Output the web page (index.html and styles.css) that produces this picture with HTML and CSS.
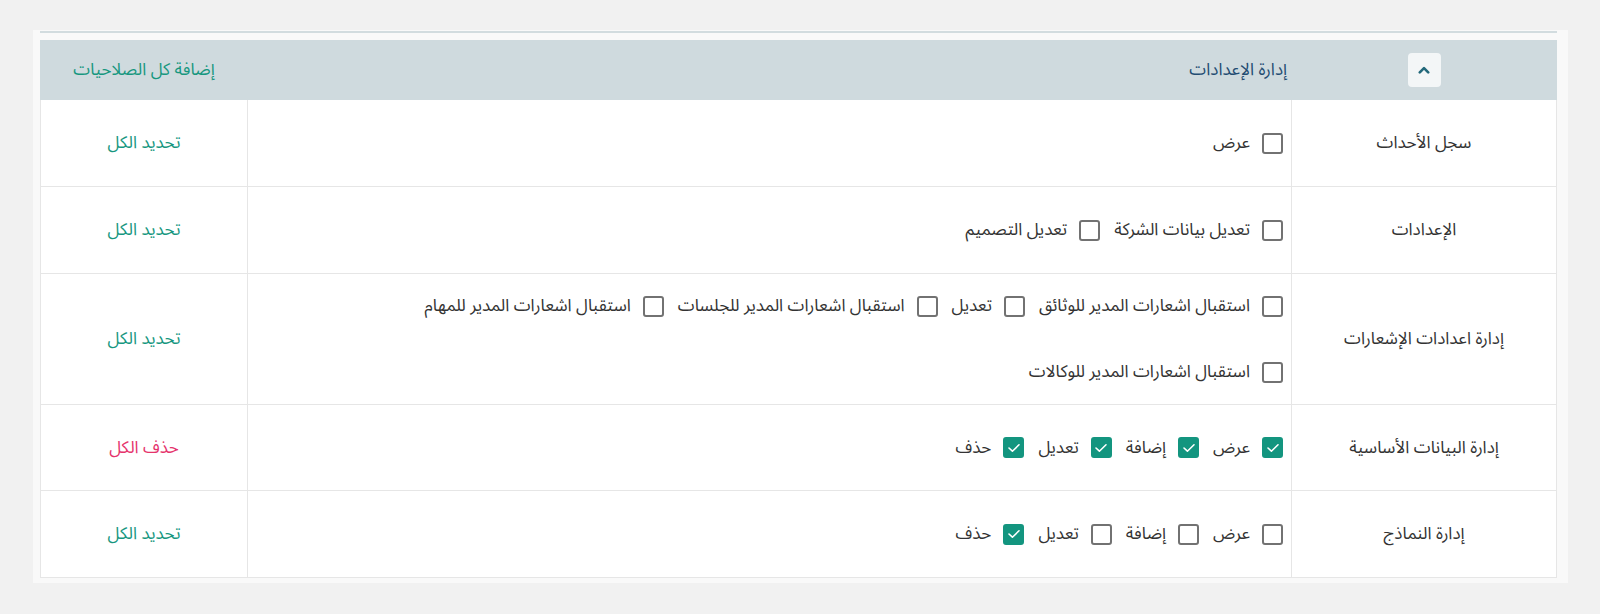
FILE: index.html
```html
<!DOCTYPE html>
<html lang="ar" dir="rtl">
<head>
<meta charset="utf-8">
<title>إدارة الإعدادات</title>
<link rel="stylesheet" href="styles.css">
</head>
<body>
<div class="card">
  <div class="card-line"></div>
  <table class="perm">
    <colgroup>
      <col class="col-name">
      <col class="col-items">
      <col class="col-action">
    </colgroup>
    <thead>
      <tr class="head">
        <th class="head-toggle">
          <span class="toggle-btn">
            <svg width="12" height="8" viewBox="0 0 12 8"><path d="M1.8 6.4 L6 2.2 L10.2 6.4" fill="none" stroke="#22687a" stroke-width="2.6" stroke-linecap="round" stroke-linejoin="round"/></svg>
          </span>
        </th>
        <th class="head-title">إدارة الإعدادات</th>
        <th class="head-action">إضافة كل الصلاحيات</th>
      </tr>
    </thead>
    <tbody>
      <tr class="r87">
        <td class="name">سجل الأحداث</td>
        <td class="items"><div class="list">
          <label class="item"><span class="cb"></span><span>عرض</span></label>
        </div></td>
        <td class="action"><span class="act-add">تحديد الكل</span></td>
      </tr>
      <tr class="r87">
        <td class="name">الإعدادات</td>
        <td class="items"><div class="list">
          <label class="item"><span class="cb"></span><span>تعديل بيانات الشركة</span></label>
          <label class="item"><span class="cb"></span><span>تعديل التصميم</span></label>
        </div></td>
        <td class="action"><span class="act-add">تحديد الكل</span></td>
      </tr>
      <tr class="r131">
        <td class="name">إدارة اعدادات الإشعارات</td>
        <td class="items"><div class="list multi">
          <label class="item"><span class="cb"></span><span>استقبال اشعارات المدير للوثائق</span></label>
          <label class="item"><span class="cb"></span><span>تعديل</span></label>
          <label class="item"><span class="cb"></span><span>استقبال اشعارات المدير للجلسات</span></label>
          <label class="item"><span class="cb"></span><span>استقبال اشعارات المدير للمهام</span></label>
          <span class="break"></span>
          <label class="item"><span class="cb"></span><span>استقبال اشعارات المدير للوكالات</span></label>
        </div></td>
        <td class="action"><span class="act-add">تحديد الكل</span></td>
      </tr>
      <tr class="r86">
        <td class="name">إدارة البيانات الأساسية</td>
        <td class="items"><div class="list">
          <label class="item"><span class="cb on"><svg width="14" height="10" viewBox="0 0 14 10"><path d="M2 5 L5.4 8.2 L12 1.8" fill="none" stroke="#fff" stroke-width="1.6" stroke-linecap="round" stroke-linejoin="round"/></svg></span><span>عرض</span></label>
          <label class="item"><span class="cb on"><svg width="14" height="10" viewBox="0 0 14 10"><path d="M2 5 L5.4 8.2 L12 1.8" fill="none" stroke="#fff" stroke-width="1.6" stroke-linecap="round" stroke-linejoin="round"/></svg></span><span>إضافة</span></label>
          <label class="item"><span class="cb on"><svg width="14" height="10" viewBox="0 0 14 10"><path d="M2 5 L5.4 8.2 L12 1.8" fill="none" stroke="#fff" stroke-width="1.6" stroke-linecap="round" stroke-linejoin="round"/></svg></span><span>تعديل</span></label>
          <label class="item"><span class="cb on"><svg width="14" height="10" viewBox="0 0 14 10"><path d="M2 5 L5.4 8.2 L12 1.8" fill="none" stroke="#fff" stroke-width="1.6" stroke-linecap="round" stroke-linejoin="round"/></svg></span><span>حذف</span></label>
        </div></td>
        <td class="action"><span class="act-del">حذف الكل</span></td>
      </tr>
      <tr class="r87">
        <td class="name">إدارة النماذج</td>
        <td class="items"><div class="list">
          <label class="item"><span class="cb"></span><span>عرض</span></label>
          <label class="item"><span class="cb"></span><span>إضافة</span></label>
          <label class="item"><span class="cb"></span><span>تعديل</span></label>
          <label class="item"><span class="cb on"><svg width="14" height="10" viewBox="0 0 14 10"><path d="M2 5 L5.4 8.2 L12 1.8" fill="none" stroke="#fff" stroke-width="1.6" stroke-linecap="round" stroke-linejoin="round"/></svg></span><span>حذف</span></label>
        </div></td>
        <td class="action"><span class="act-add">تحديد الكل</span></td>
      </tr>
    </tbody>
  </table>
</div>
</body>
</html>
```
FILE: styles.css
```css
html, body {
  margin: 0;
  padding: 0;
}
body {
  background: #f1f1f1;
  font-family: "Noto Sans Arabic", "DejaVu Sans", "Noto Sans", sans-serif;
  font-size: 17px;
  color: #333;
  direction: rtl;
}
.card {
  margin: 30px 32px 0 33px;
  background: #f9f9f9;
  padding: 1px 11px 5px 7px;
}
.card-line {
  height: 2px;
  background: #d2dcdf;
  margin-bottom: 7px;
}
.perm {
  width: 100%;
  border-collapse: collapse;
  table-layout: fixed;
  background: #fff;
}
.col-name { width: 265px; }
.col-action { width: 207px; }
.head th {
  height: 58px;
  padding: 0;
  background: #cfdade;
  font-weight: normal;
  border: 1px solid #cfdade;
}
.head-toggle { text-align: center; }
.toggle-btn {
  display: inline-flex;
  align-items: center;
  justify-content: center;
  width: 33px;
  height: 34px;
  border-radius: 4px;
  background: #f3f6f7;
  vertical-align: middle;
}
.head-title {
  text-align: right;
  padding-right: 4px !important;
  color: #234c72;
}
.head-action {
  text-align: center;
  color: #17977f;
}
.perm td {
  border: 1px solid #e6e6e6;
  padding: 0;
  vertical-align: middle;
}
.r87 td { height: 86px; }
.r86 td { height: 85px; }
.r131 td { height: 130px; }
.name {
  text-align: center;
  color: #333;
}
.action {
  text-align: center;
}
.act-add { color: #17977f; }
.act-del { color: #e5336c; }
.items {
  padding: 0 8px !important;
}
.list {
  display: flex;
  flex-wrap: wrap;
  align-items: center;
  column-gap: 14px;
  row-gap: 22px;
}
.break {
  flex-basis: 100%;
  height: 0;
}
.item {
  display: inline-flex;
  align-items: center;
  gap: 12px;
  height: 22px;
  line-height: 22px;
  color: #333;
}
.cb {
  box-sizing: border-box;
  width: 21px;
  height: 21px;
  border: 2px solid #727272;
  border-radius: 3px;
  background: #fff;
  display: inline-flex;
  align-items: center;
  justify-content: center;
  flex: none;
}
.cb.on {
  background: #13957f;
  border-color: #13957f;
}
```
